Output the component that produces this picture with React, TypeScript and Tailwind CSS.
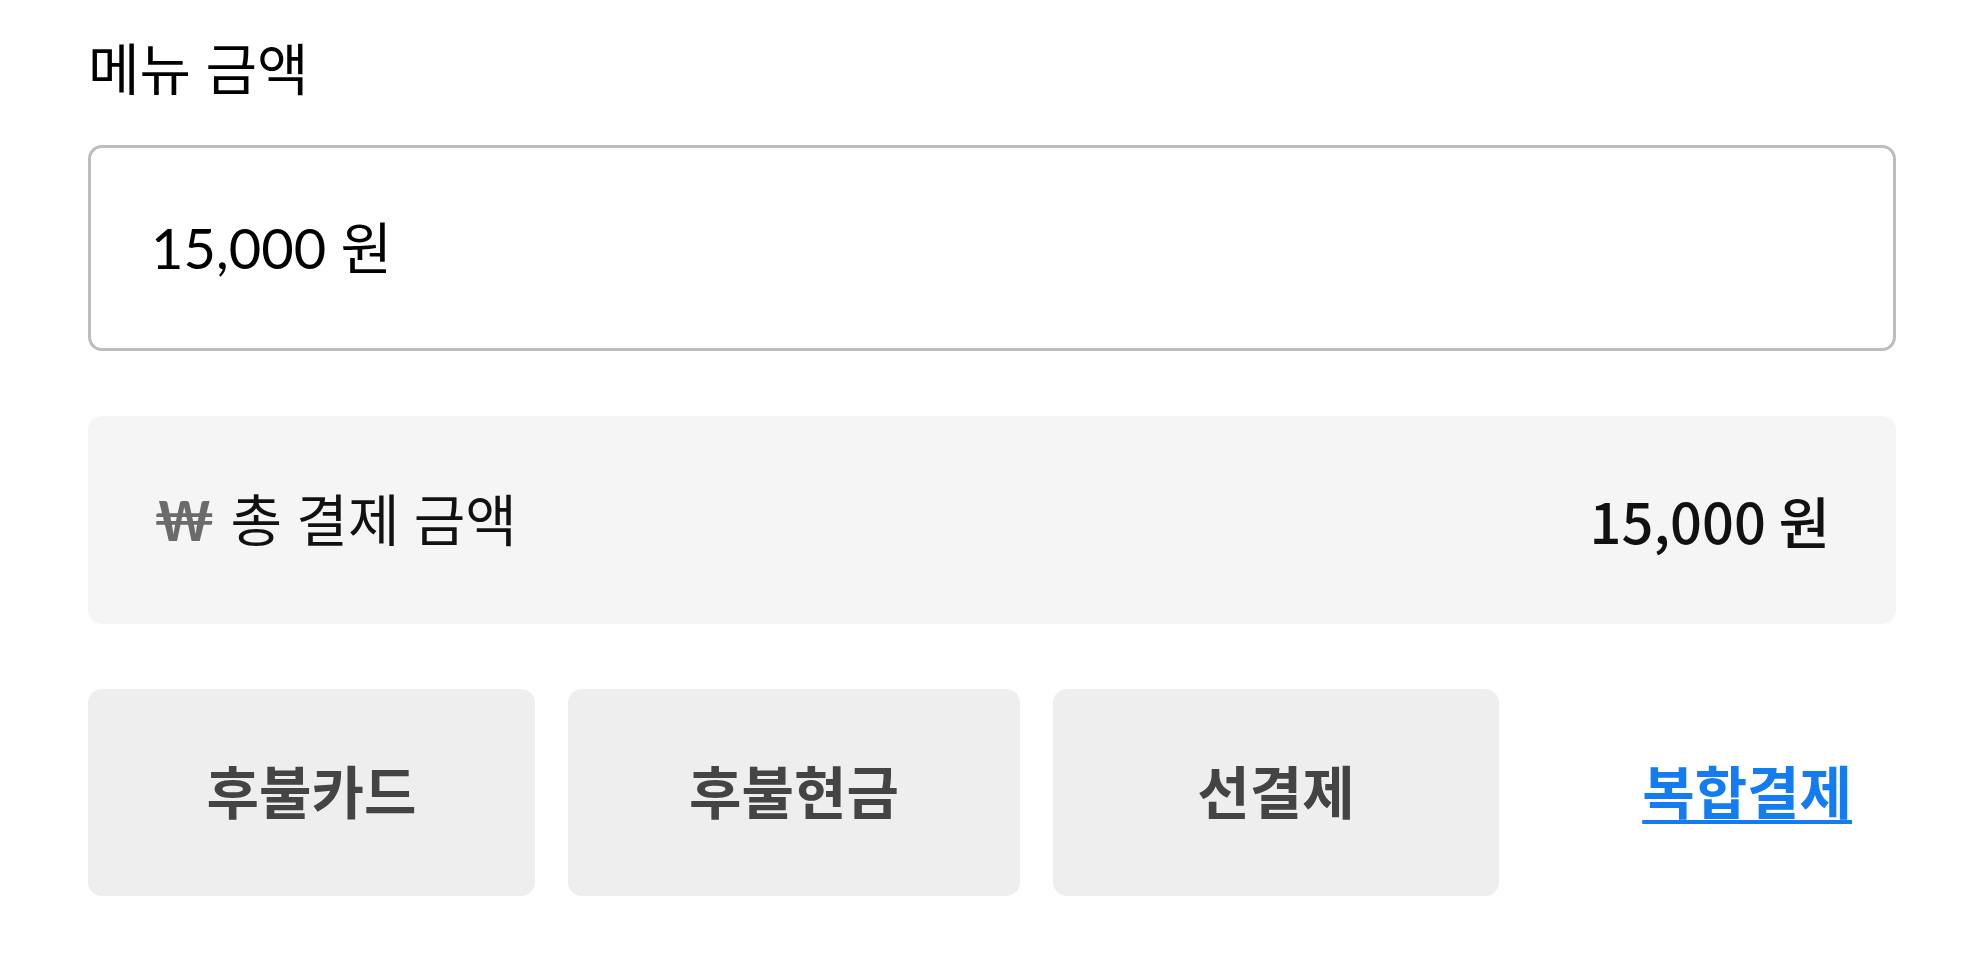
const KR = "font-['Lato','Noto_Sans_CJK_KR',sans-serif]";

const App = () => {
  return (
    <div className={`min-h-[960px] bg-white px-[88px] pt-[32px] ${KR}`}>
      <h2 className="text-[56px] leading-[74px] text-black">메뉴 금액</h2>

      {/* menu amount input */}
      <div className="mt-[39px] flex h-[206px] items-center rounded-[14px] border-[3px] border-[#bdbdbd] bg-white pl-[60px]">
        <span className="text-[56px] text-black">15,000 원</span>
      </div>

      {/* total */}
      <div className="mt-[65px] flex h-[208px] items-center justify-between rounded-[14px] bg-[#f5f5f5] px-[66px]">
        <div className="flex items-center gap-[16px] text-[56px] text-[#111]">
          <span className="font-bold text-[#6b6b6b]">₩</span>
          <span>총 결제 금액</span>
        </div>
        <span className="font-['Noto_Sans_CJK_KR',sans-serif] text-[56px] font-medium text-[#111]">15,000 원</span>
      </div>

      {/* payment methods */}
      <div className="mt-[65px] flex h-[207px] items-stretch gap-[33px]">
        <button className="w-[447px] rounded-[14px] bg-[#eeeeee] pb-[6px] font-['Noto_Sans_CJK_KR',sans-serif] text-[57px] font-bold text-[#444]">
          후불카드
        </button>
        <button className="w-[452px] rounded-[14px] bg-[#eeeeee] pb-[6px] font-['Noto_Sans_CJK_KR',sans-serif] text-[57px] font-bold text-[#444]">
          후불현금
        </button>
        <button className="w-[446px] rounded-[14px] bg-[#eeeeee] pb-[6px] font-['Noto_Sans_CJK_KR',sans-serif] text-[57px] font-bold text-[#444]">
          선결제
        </button>
        <div className="flex flex-1 items-center justify-end pb-[6px] pr-[44px]">
          <a
            href="#"
            className="font-['Noto_Sans_CJK_KR',sans-serif] text-[57px] font-bold text-[#127cf0] underline decoration-[4px] underline-offset-[6px]"
          >
            복합결제
          </a>
        </div>
      </div>
    </div>
  );
};

export default App;
